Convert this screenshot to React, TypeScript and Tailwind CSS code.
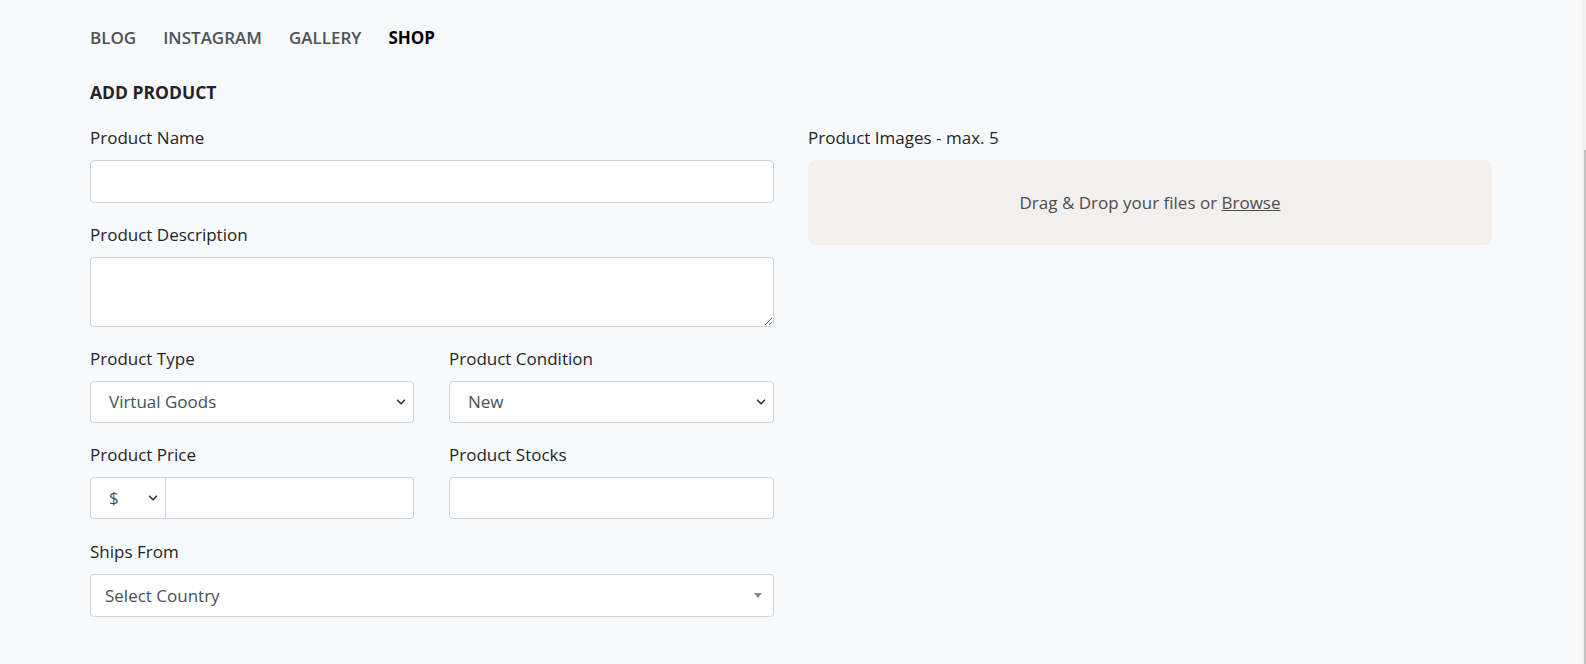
import { ChevronDown } from 'lucide-react'

const navLinks = ['Blog', 'Instagram', 'Gallery', 'Shop']

function Label({ children }: { children: React.ReactNode }) {
    return <label className="block text-[17px] leading-6 text-[#212529] mb-[10px]">{children}</label>
}

function SelectBox({ value, className = '' }: { value: string, className?: string }) {
    return (
        <div className={`flex items-center justify-between bg-white border border-[#ced4da] rounded-[4px] h-[42px] pl-[18px] pr-[5px] text-[17px] text-[#495057] ${className}`}>
            <span>{value}</span>
            <ChevronDown size={14} strokeWidth={3} className="text-[#343a40]" />
        </div>
    )
}

export default function App() {
    return (
        <div className="min-h-[664px] bg-[#f8f9fa] font-['Open_Sans',sans-serif] relative">
            <div className="pl-[90px] pt-[26px] w-[1492px]">
                <nav className="flex gap-[27px] text-[17px] leading-6 uppercase">
                    {navLinks.map(link => (
                        <a key={link} className={link === 'Shop' ? 'font-bold text-black' : 'font-semibold text-[#4d5257]'}>{link}</a>
                    ))}
                </nav>

                <h2 className="mt-[30px] text-[17.5px] leading-6 font-bold text-[#212529] uppercase">Add Product</h2>

                <div className="grid grid-cols-2 gap-[34px] mt-[22px]">
                    <div>
                        <Label>Product Name</Label>
                        <input className="block w-full h-[43px] bg-white border border-[#ced4da] rounded-[4px]" />

                        <div className="mt-[20px]">
                            <Label>Product Description</Label>
                            <textarea className="block w-full h-[70px] bg-white border border-[#ced4da] rounded-[4px]" />
                        </div>

                        <div className="grid grid-cols-[324px_1fr] gap-[35px] mt-[20px]">
                            <div>
                                <Label>Product Type</Label>
                                <SelectBox value="Virtual Goods" />
                            </div>
                            <div>
                                <Label>Product Condition</Label>
                                <SelectBox value="New" />
                            </div>
                        </div>

                        <div className="grid grid-cols-[324px_1fr] gap-[35px] mt-[20px]">
                            <div>
                                <Label>Product Price</Label>
                                <div className="flex">
                                    <SelectBox value="$" className="w-[76px] rounded-r-none" />
                                    <input className="flex-1 h-[42px] bg-white border border-l-0 border-[#ced4da] rounded-[4px] rounded-l-none" />
                                </div>
                            </div>
                            <div>
                                <Label>Product Stocks</Label>
                                <input className="block w-full h-[42px] bg-white border border-[#ced4da] rounded-[4px]" />
                            </div>
                        </div>

                        <div className="mt-[21px]">
                            <Label>Ships From</Label>
                            <div className="flex items-center justify-between bg-white border border-[#ced4da] rounded-[4px] h-[43px] pl-[14px] pr-[11px] text-[17px] text-[#495057]">
                                <span>Select Country</span>
                                <span className="w-0 h-0 border-l-[4px] border-r-[4px] border-t-[5px] border-l-transparent border-r-transparent border-t-[#888]" />
                            </div>
                        </div>
                    </div>

                    <div>
                        <Label>Product Images - max. 5</Label>
                        <div className="flex items-center justify-center h-[85px] bg-[#f1f0ee] rounded-[8px] text-[17px] text-[#4d4d4d]">
                            <span>Drag &amp; Drop your files or <span className="underline">Browse</span></span>
                        </div>
                    </div>
                </div>
            </div>

            <div className="absolute top-0 right-0 w-[4px] h-full bg-[#f1f1f1]">
                <div className="mt-[150px] ml-[2px] w-[2px] h-[514px] bg-[#c1c1c1]" />
            </div>
        </div>
    )
}
